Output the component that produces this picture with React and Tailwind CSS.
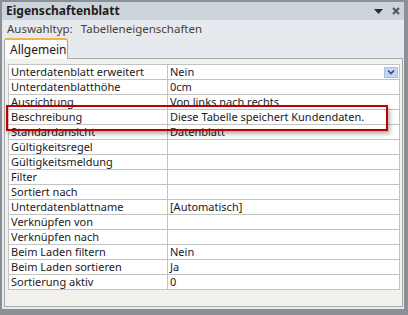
const rows = [
  ["Unterdatenblatt erweitert", "Nein", true],
  ["Unterdatenblatthöhe", "0cm"],
  ["Ausrichtung", "Von links nach rechts"],
  ["Beschreibung", "Diese Tabelle speichert Kundendaten."],
  ["Standardansicht", "Datenblatt"],
  ["Gültigkeitsregel", ""],
  ["Gültigkeitsmeldung", ""],
  ["Filter", ""],
  ["Sortiert nach", ""],
  ["Unterdatenblattname", "[Automatisch]"],
  ["Verknüpfen von", ""],
  ["Verknüpfen nach", ""],
  ["Beim Laden filtern", "Nein"],
  ["Beim Laden sortieren", "Ja"],
  ["Sortierung aktiv", "0"],
];

const App = () => {
  return (
    <div
      className="w-[408px] h-[315px] bg-[#8b9097] pt-[2px] pl-[2px] pr-[4px] pb-[6px] text-[11px] text-[#1a1a1a]"
      style={{ fontFamily: '"Noto Sans", "DejaVu Sans", sans-serif' }}
    >
      <div className="flex flex-col h-full bg-[#e6e9ee]">
        {/* title bar */}
        <div className="h-[18px] bg-[#cdd3db] flex items-center justify-between pl-[4px] pr-[4px]">
          <span className="font-bold text-[12px] leading-none text-[#1e1e1e]">Eigenschaftenblatt</span>
          <div className="flex items-center gap-[9px]">
            <svg width="9" height="5" viewBox="0 0 9 5">
              <path d="M0 0h9L4.5 5z" fill="#2b2b2b" />
            </svg>
            <svg width="8" height="8" viewBox="0 0 8 8">
              <path d="M1 1l6 6M7 1l-6 6" stroke="#555" strokeWidth="2" />
            </svg>
          </div>
        </div>

        <div className="h-[18px] flex items-center pl-[5px] text-[11.5px] text-[#4a3f33]">
          <span>Auswahltyp:</span>
          <span className="ml-[8px]">Tabelleneigenschaften</span>
        </div>

        {/* tab */}
        <div className="flex pl-[2px] h-[20px]">
          <div className="w-[64px] h-[21px] bg-[#fbfbfa] border-x border-[#a7a9ac] border-t-2 border-t-[#f2b24a] rounded-t-[3px] flex items-center pl-[5px] text-[12px] relative z-10">
            Allgemein
          </div>
        </div>

        {/* panel */}
        <div className="flex-1 ml-[2px] mr-[1px] mb-[2px] bg-[#f2f1ec] border border-[#a7a9ac] pt-[5px] pl-[3px] pr-[2px]">
          <div className="relative w-[392px] border border-b-0 border-[#c3c3c3] bg-white">
            {rows.map(([label, value, dropdown]) => (
              <div key={label} className="flex h-[15px] border-b border-[#c3c3c3]">
                <div className="w-[159px] border-r border-[#c3c3c3] pl-[2px] leading-[14px] whitespace-nowrap">
                  {label}
                </div>
                <div className="flex-1 flex items-center justify-between pl-[2px] pr-[1px] leading-[14px] whitespace-nowrap">
                  <span>{value}</span>
                  {dropdown && (
                    <div className="w-[14px] h-[11px] bg-[#c5d5f0] border border-[#a9bfe3] flex items-center justify-center">
                      <svg width="8" height="5" viewBox="0 0 8 5">
                        <path d="M1 0.5l3 3 3-3" stroke="#2f4f86" strokeWidth="1.6" fill="none" />
                      </svg>
                    </div>
                  )}
                </div>
              </div>
            ))}
            <div className="absolute left-[-3px] top-[40px] w-[382px] h-[26px] border-2 border-[#c00000] shadow-[2px_3px_4px_rgba(0,0,0,0.3)]"></div>
          </div>
        </div>
      </div>
    </div>
  );
};

export default App;
